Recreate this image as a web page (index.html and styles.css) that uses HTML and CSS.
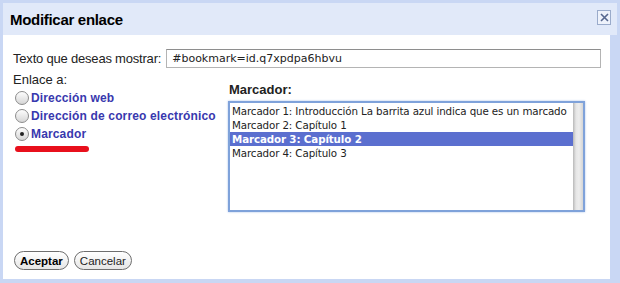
FILE: index.html
```html
<!DOCTYPE html>
<html lang="es">
<head>
    <meta charset="UTF-8">
    <title>Modificar enlace</title>
    <link rel="stylesheet" href="styles.css">
</head>
<body>

    <!-- Diálogo para modificar enlace -->
    <div class="dialog">
        <div class="titlebar">
            <span class="title">Modificar enlace</span>
            <span class="close-btn">
                <svg width="9" height="9" viewBox="0 0 9 9"><path d="M1 1 L8 8 M8 1 L1 8" stroke="#56678f" stroke-width="1.6"/></svg>
            </span>
        </div>

        <div class="content">
            <div class="text-row">
                <label for="text">Texto que deseas mostrar:</label>
                <input type="text" id="text" value="#bookmark=id.q7xpdpa6hbvu">
            </div>

            <div class="columns">
                <div class="link-types">
                    <div class="link-label">Enlace a:</div>
                    <div class="radio-row"><span class="radio"></span>Dirección web</div>
                    <div class="radio-row"><span class="radio"></span>Dirección de correo electrónico</div>
                    <div class="radio-row"><span class="radio checked"></span>Marcador</div>
                    <div class="red-mark"></div>
                </div>

                <div class="bookmarks">
                    <div class="bookmark-label">Marcador:</div>
                    <div class="listbox">
                        <div class="items">
                            <div class="item">Marcador 1: Introducción La barrita azul indica que es un marcado</div>
                            <div class="item">Marcador 2: Capítulo 1</div>
                            <div class="item selected">Marcador 3: Capítulo 2</div>
                            <div class="item">Marcador 4: Capítulo 3</div>
                        </div>
                        <div class="scrollbar"></div>
                    </div>
                </div>
            </div>

            <div class="buttons">
                <button class="btn btn-ok">Aceptar</button>
                <button class="btn">Cancelar</button>
            </div>
        </div>
    </div>

</body>
</html>
```

FILE: styles.css
```css
body {
    margin: 0;
    font-family: "Liberation Sans", Arial, sans-serif;
    background-color: #c9d7f4;
}

.dialog {
    width: 620px;
    height: 283px;
    box-sizing: border-box;
    padding: 3px 3px 4px 3px;
    background-color: #c9d7f4;
    display: flex;
    flex-direction: column;
}

.titlebar {
    height: 32px;
    background-color: #e1e9f9;
    display: flex;
    align-items: center;
    justify-content: space-between;
    padding: 0 6px 0 7px;
    flex-shrink: 0;
}

.title {
    font-size: 15px;
    font-weight: bold;
    letter-spacing: -0.3px;
    color: #000;
}

.close-btn {
    width: 12px;
    height: 13px;
    border: 1px solid #9aabcb;
    background-color: #eef2fb;
    display: flex;
    align-items: center;
    justify-content: center;
    margin-bottom: 3px;
}

.content {
    flex: 1;
    background-color: #fff;
    margin-right: 7px;
    padding: 14px 9px 9px 10px;
    display: flex;
    flex-direction: column;
    font-size: 13px;
    color: #222;
}

.text-row {
    display: flex;
    align-items: center;
    gap: 5px;
}

.text-row label {
    white-space: nowrap;
    letter-spacing: -0.2px;
}

.text-row input {
    flex: 1;
    min-width: 0;
    height: 19px;
    box-sizing: border-box;
    border: 1px solid #b4b4b4;
    border-top-color: #8e8e8e;
    padding: 0 5px;
    font-family: "DejaVu Sans", sans-serif;
    font-size: 11px;
    color: #222;
}

.columns {
    display: flex;
    margin-top: 4px;
}

.link-types {
    width: 215px;
}

.link-label {
    line-height: 16px;
    height: 17px;
}

.radio-row {
    display: flex;
    align-items: center;
    height: 18px;
    color: #3838ae;
    font-weight: bold;
    font-size: 12px;
    letter-spacing: 0.15px;
}

.radio {
    width: 12px;
    height: 12px;
    border-radius: 50%;
    border: 1px solid #8c8c8c;
    background: linear-gradient(#fdfdfd, #d6d6d6);
    margin: 0 2px 0 2px;
    position: relative;
}

.radio.checked::after {
    content: "";
    position: absolute;
    left: 4px;
    top: 4px;
    width: 4px;
    height: 4px;
    border-radius: 50%;
    background-color: #222;
}

.red-mark {
    width: 74px;
    height: 6px;
    margin: 3px 0 0 2px;
    border-radius: 3px;
    background-color: #e8101c;
}

.bookmarks {
    display: flex;
    flex-direction: column;
}

.bookmark-label {
    font-weight: bold;
    line-height: 16px;
    margin: 10px 0 3px 1px;
}

.listbox {
    width: 357px;
    height: 111px;
    box-sizing: border-box;
    border: 2px solid #7fa2da;
    box-shadow: 0 0 2px #a8c1ea;
    display: flex;
    padding-top: 1px;
}

.items {
    flex: 1;
    overflow: hidden;
    font-family: "DejaVu Sans", sans-serif;
    font-size: 10.3px;
    letter-spacing: -0.12px;
    color: #222;
}

.item {
    height: 14px;
    line-height: 14px;
    white-space: nowrap;
    padding-left: 2px;
}

.item.selected {
    background-color: #5b6fcf;
    color: #fff;
    font-weight: bold;
}

.scrollbar {
    width: 10px;
    margin-top: -1px;
    background: linear-gradient(to right, #b9b9b9, #e6e6e6 30%, #ededed 60%, #d5d5d5);
}

.buttons {
    margin-top: auto;
    display: flex;
    gap: 5px;
    padding-left: 1px;
}

.btn {
    height: 19px;
    padding: 0 5px;
    border: 1px solid #6e6e6e;
    border-radius: 10px;
    background: linear-gradient(#ffffff, #e6e6e6);
    font-family: "Liberation Sans", Arial, sans-serif;
    font-size: 11.5px;
    color: #222;
}

.btn-ok {
    font-weight: bold;
    color: #000;
}
```
